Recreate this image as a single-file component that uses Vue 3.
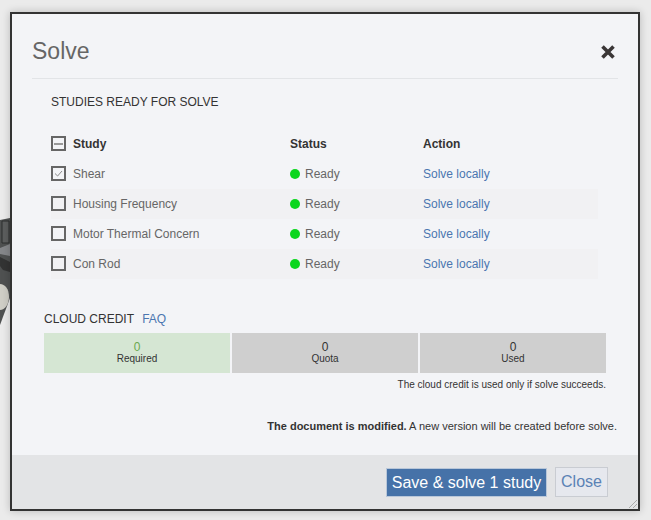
<script setup>
const studies = [
  { name: 'Shear', checked: true },
  { name: 'Housing Frequency', checked: false },
  { name: 'Motor Thermal Concern', checked: false },
  { name: 'Con Rod', checked: false }
]
const credits = [
  { value: 0, label: 'Required', ok: true },
  { value: 0, label: 'Quota', ok: false },
  { value: 0, label: 'Used', ok: false }
]
</script>

<template>
  <div class="page">
    <svg class="backdrop" width="10" height="120" viewBox="0 0 10 120">
      <path d="M0 10 L10 8 V60 L10 88 L0 115 Z" fill="#4f5151" />
      <path d="M2 11 H9 V33 H2 Z" fill="#5c5e5e" stroke="#2d2e2e" stroke-width="1" />
      <path d="M0 38 L10 34 V46 L0 44 Z" fill="#85878a" />
      <path d="M0 47 L10 52 L10 62 L3 60 L0 56 Z" fill="#333434" />
      <path d="M0 74 C5 74 9 79 9 87 C9 94 5 100 0 100 Z" fill="#cfcec6" />
    </svg>
    <section class="modal">
      <div class="body">
        <header class="head">
          <h1>Solve</h1>
          <svg class="close-x" width="16" height="16" viewBox="0 0 16 16">
            <path d="M2.5 2.5 L13.5 13.5 M13.5 2.5 L2.5 13.5" stroke="#3a3636" stroke-width="3.6" fill="none" />
          </svg>
        </header>
        <h2 class="section">STUDIES READY FOR SOLVE</h2>
        <div class="table">
          <div class="row row-head">
            <div class="study">
              <span class="box"><span class="dash"></span></span>
              <span>Study</span>
            </div>
            <div>Status</div>
            <div>Action</div>
          </div>
          <div v-for="s in studies" :key="s.name" class="row">
            <div class="study">
              <span class="box">
                <svg v-if="s.checked" width="11" height="11" viewBox="0 0 11 11">
                  <path d="M2 5.5 L4.6 8 L9 3" stroke="#8a8a8a" stroke-width="1" fill="none" />
                </svg>
              </span>
              <span>{{ s.name }}</span>
            </div>
            <div class="status"><i class="dot"></i>Ready</div>
            <div><a class="link">Solve locally</a></div>
          </div>
        </div>
        <div class="credit-title">CLOUD CREDIT <a class="link faq">FAQ</a></div>
        <div class="credits">
          <div v-for="c in credits" :key="c.label" class="credit" :class="{ ok: c.ok }">
            <div class="num">{{ c.value }}</div>
            <div class="lab">{{ c.label }}</div>
          </div>
        </div>
        <p class="note">The cloud credit is used only if solve succeeds.</p>
        <p class="modified"><b>The document is modified.</b> A new version will be created before solve.</p>
      </div>
      <footer class="foot">
        <button class="primary">Save &amp; solve 1 study</button>
        <button class="secondary">Close</button>
        <svg class="grip" width="10" height="10" viewBox="0 0 10 10">
          <path d="M1 9 L9 1 M5 9 L9 5" stroke="#a9a9a9" stroke-width="1" fill="none" />
        </svg>
      </footer>
    </section>
  </div>
</template>

<style>
html, body { margin: 0; background: #ebebeb; }
</style>

<style scoped>
.page {
  position: relative;
  width: 651px;
  height: 520px;
  padding: 12px 0 0 10px;
  box-sizing: border-box;
  overflow: hidden;
  background: #ebebeb;
  font-family: "Liberation Sans", Arial, sans-serif;
}
.backdrop { position: absolute; left: 0; top: 210px; }
.modal {
  position: relative;
  width: 630px;
  height: 499px;
  box-sizing: border-box;
  border: 2px solid #333;
  background: #f3f4f7;
  box-shadow: 0 0 8px rgba(0, 0, 0, 0.22);
  display: flex;
  flex-direction: column;
}
.body { flex: 1; padding: 0 20px; }
.head {
  display: flex;
  justify-content: space-between;
  align-items: center;
  height: 64px;
  border-bottom: 1px solid #e2e4e7;
  box-sizing: content-box;
}
.head h1 {
  margin: 0;
  font-size: 23px;
  font-weight: 400;
  color: #666;
  line-height: 28px;
  padding-top: 9px;
}
.close-x { margin: 11px 2px 0 0; }
.section {
  margin: 16px 0 0 19px;
  font-size: 12px;
  font-weight: 400;
  line-height: 14px;
  color: #333;
}
.table { margin: 20px 0 0 19px; width: 547px; }
.row {
  display: grid;
  grid-template-columns: 239px 133px 1fr;
  align-items: center;
  height: 30px;
  font-size: 12px;
  color: #666;
}
.row:nth-child(2n+3) { background: #f1f1f3; }
.row-head { font-weight: 700; color: #333; }
.study { display: flex; align-items: center; gap: 7px; }
.box {
  width: 15px;
  height: 15px;
  box-sizing: border-box;
  border: 2px solid #666;
  display: flex;
  align-items: center;
  justify-content: center;
  margin-top: -1px;
}
.dash { width: 9px; height: 2px; background: #999; }
.dot {
  display: inline-block;
  width: 10px;
  height: 10px;
  border-radius: 50%;
  background: #0cd61e;
  margin-right: 5px;
  vertical-align: -0.5px;
}
.link { color: #4a76b0; }
.credit-title {
  margin: 33px 0 0 12px;
  font-size: 12px;
  line-height: 14px;
  color: #333;
}
.faq { margin-left: 5px; }
.credits {
  display: grid;
  grid-template-columns: repeat(3, 186px);
  gap: 2px;
  margin: 7px 0 0 12px;
}
.credit {
  height: 40px;
  background: #cfcfcf;
  text-align: center;
  color: #333;
  box-sizing: border-box;
  padding-top: 8px;
}
.credit.ok { background: #d5e6d3; }
.num { font-size: 12px; line-height: 12px; }
.ok .num { color: #6aa84f; }
.lab { font-size: 10px; line-height: 11px; }
.note {
  margin: 6px 0 0;
  width: 574px;
  text-align: right;
  font-size: 10px;
  line-height: 12px;
  color: #333;
}
.modified {
  margin: 29px 1px 0 0;
  text-align: right;
  font-size: 11px;
  line-height: 13px;
  color: #333;
}
.foot {
  position: relative;
  height: 54px;
  background: #e3e4e6;
  display: flex;
  justify-content: flex-end;
  align-items: center;
  gap: 8px;
  padding: 0 30px 0 0;
  box-sizing: border-box;
}
button {
  font-family: inherit;
  font-size: 16px;
  padding: 0;
  box-sizing: border-box;
}
.primary {
  width: 161px;
  height: 29px;
  background: #4672a8;
  color: #fff;
  border: 1px solid #b9c7d9;
  padding-top: 1px;
}
.secondary {
  width: 53px;
  height: 30px;
  background: #e6e8ee;
  color: #5b82b5;
  border: 1px solid #c9ccd2;
}
.grip { position: absolute; right: 0; bottom: 0; }
</style>
